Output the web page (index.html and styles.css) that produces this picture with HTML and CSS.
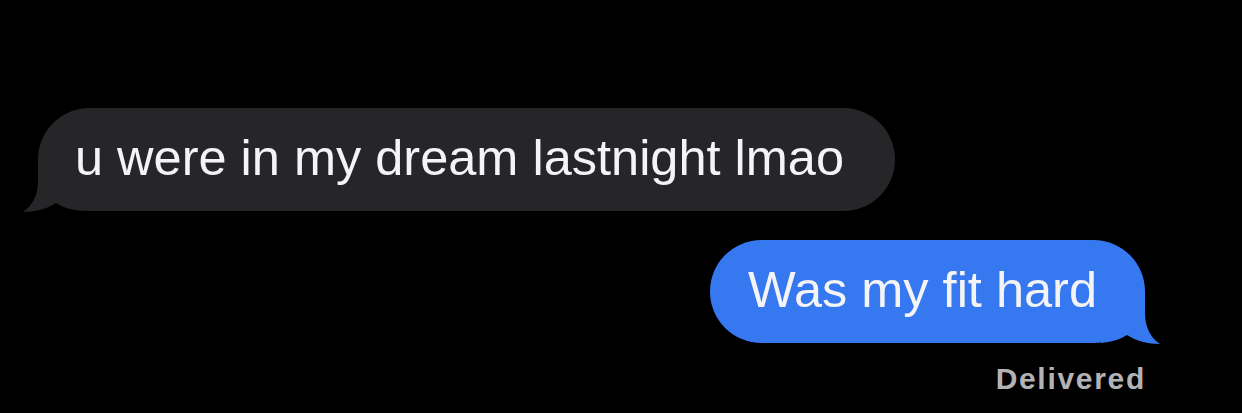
FILE: index.html
```html
<!DOCTYPE html>
<html lang="en">
<head>
<meta charset="utf-8">
<title>Messages</title>
<link rel="stylesheet" href="styles.css">
</head>
<body>
<main class="thread">
  <div class="row row-them">
    <div class="bubble bubble-them">
      <svg class="tail tail-them" width="60" height="60" viewBox="0 0 60 60" aria-hidden="true">
        <path d="M16 6 L16 30 C16 44 9 55 1 60 C13 60 25 57 34 51 C42 56 50 58 60 59 L60 6 Z"/>
      </svg>
      <span class="text">u were in my dream lastnight lmao</span>
    </div>
  </div>
  <div class="row row-me">
    <div class="bubble bubble-me">
      <svg class="tail tail-me" width="60" height="60" viewBox="0 0 60 60" aria-hidden="true">
        <path d="M44 6 L44 30 C44 44 51 55 59 60 C47 60 35 57 26 51 C18 56 10 58 0 59 L0 6 Z"/>
      </svg>
      <span class="text">Was my fit hard</span>
    </div>
  </div>
  <div class="row row-me">
    <span class="status">Delivered</span>
  </div>
</main>
</body>
</html>
```
FILE: styles.css
```css
html, body {
  margin: 0;
  padding: 0;
  background: #000;
}

body {
  width: 1242px;
  height: 413px;
  overflow: hidden;
  font-family: "Liberation Sans", Arial, sans-serif;
}

.thread {
  display: flex;
  flex-direction: column;
  padding-top: 108px;
}

.row {
  display: flex;
}

.row-them {
  justify-content: flex-start;
  padding-left: 38px;
}

.row-me {
  justify-content: flex-end;
  padding-right: 97px;
}

.bubble {
  position: relative;
  display: flex;
  align-items: center;
  height: 103px;
  box-sizing: border-box;
  border-radius: 52px;
  font-size: 50.5px;
  line-height: 1;
  color: #f4f4f6;
}

.bubble-them {
  background: #262628;
  padding: 0 51px 0 37px;
}

.bubble-me {
  background: #3578ef;
  padding: 0 48px 0 38px;
  margin-top: 29px;
}

.text {
  position: relative;
  padding-bottom: 2px;
}

.tail {
  position: absolute;
  bottom: -1px;
}

.tail-them {
  left: -16px;
  fill: #262628;
}

.tail-me {
  right: -16px;
  fill: #3578ef;
}

.status {
  margin-top: 18px;
  margin-right: -1px;
  font-size: 30px;
  line-height: 36px;
  font-weight: 700;
  letter-spacing: 1.7px;
  color: #b3b3b5;
}
```
